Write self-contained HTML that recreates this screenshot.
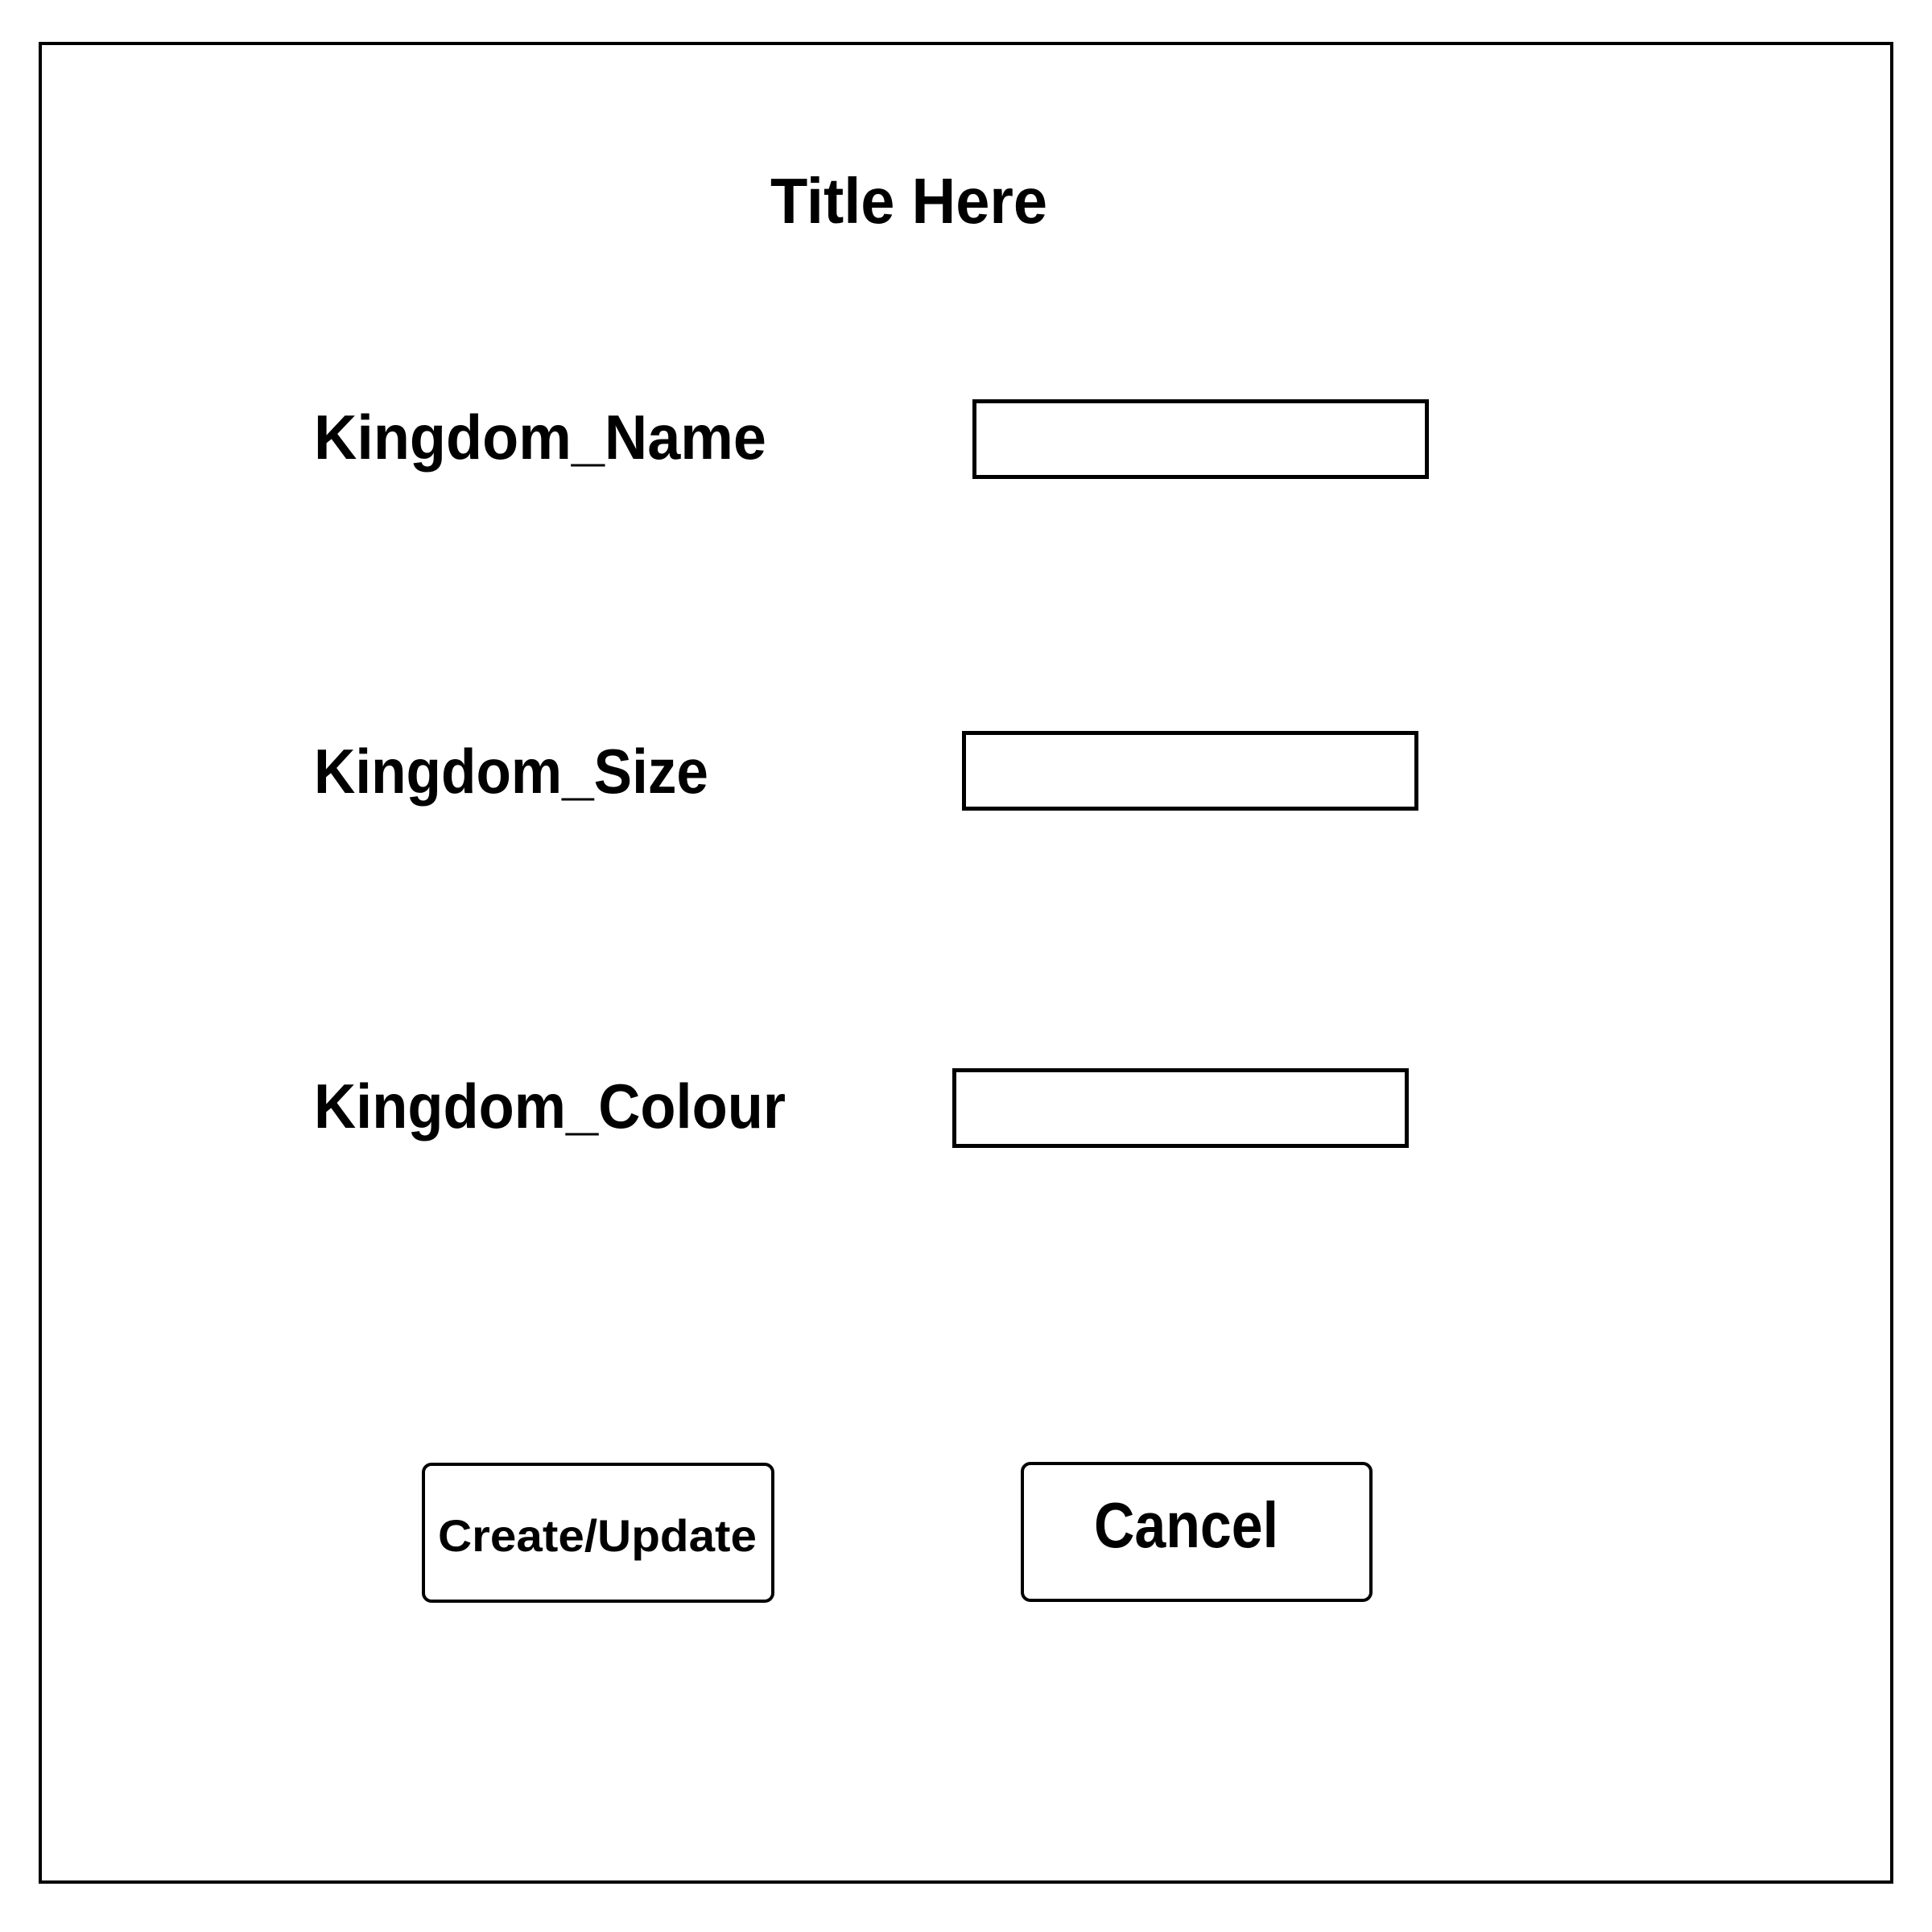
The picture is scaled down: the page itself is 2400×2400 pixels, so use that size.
<!DOCTYPE html>
<html><head><meta charset="utf-8">
<style>
html,body{margin:0;padding:0;background:#fff;}
body{width:2400px;height:2400px;position:relative;overflow:hidden;font-family:"Liberation Sans",sans-serif;font-weight:bold;color:#000;}
.b{position:absolute;box-sizing:border-box;border:5px solid #000;}
.t{position:absolute;white-space:nowrap;line-height:normal;transform-origin:0 0;}
</style></head><body>
<div class="b" style="left:48px;top:52px;width:2304px;height:2288px;border-width:4px;"></div>

<div class="t" data-w="344" style="left:957px;top:204px;font-size:80px;">Title Here</div>

<div class="t" data-w="562" style="left:390px;top:498px;font-size:78px;">Kingdom_Name</div>
<div class="t" data-w="490" style="left:390px;top:913px;font-size:78px;">Kingdom_Size</div>
<div class="t" data-w="586" style="left:390px;top:1329px;font-size:78px;">Kingdom_Colour</div>

<div class="b" style="left:1208px;top:496px;width:567px;height:99px;"></div>
<div class="b" style="left:1195px;top:908px;width:567px;height:99px;"></div>
<div class="b" style="left:1183px;top:1327px;width:567px;height:99px;"></div>

<div class="b" style="left:524px;top:1817px;width:438px;height:174px;border-radius:12px;border-width:4px;"></div>
<div class="b" style="left:1268px;top:1816px;width:437px;height:174px;border-radius:12px;border-width:4px;"></div>

<div class="t" data-w="396" style="left:544px;top:1875px;font-size:56px;">Create/Update</div>
<div class="t" data-w="229" style="left:1359px;top:1849px;font-size:80px;">Cancel</div>

<script>
document.querySelectorAll('.t').forEach(function(e){
  var w=parseFloat(e.getAttribute('data-w'));var r=e.getBoundingClientRect().width;
  if(r>0)e.style.transform='scaleX('+(w/r)+')';
});
</script>
</body></html>
